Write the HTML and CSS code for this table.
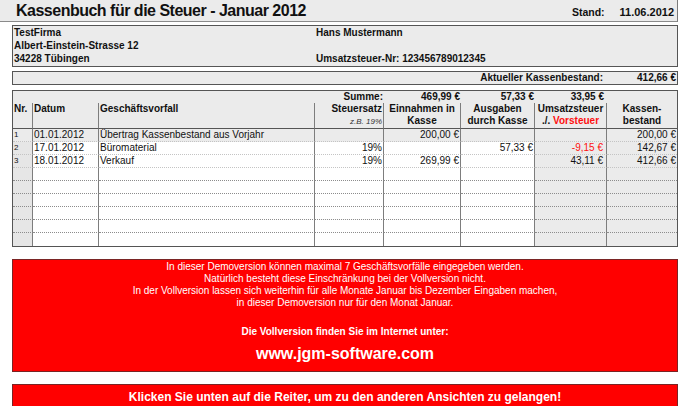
FILE: index.html
```html
<!DOCTYPE html>
<html lang="de">
<head>
<meta charset="utf-8">
<title>Kassenbuch</title>
<link rel="stylesheet" href="styles.css">
</head>
<body>
<div class="sheet">
  <header class="titlebar">
    <h1 class="title">Kassenbuch für die Steuer - Januar 2012</h1>
    <div class="stand"><span class="stand-label">Stand:</span><span class="stand-date">11.06.2012</span></div>
  </header>

  <section class="company">
    <div class="company-col">
      <div>TestFirma</div>
      <div>Albert-Einstein-Strasse 12</div>
      <div>34228 Tübingen</div>
    </div>
    <div class="company-col">
      <div>Hans Mustermann</div>
      <div>&nbsp;</div>
      <div>Umsatzsteuer-Nr: 123456789012345</div>
    </div>
  </section>

  <section class="balance">
    <span class="balance-label">Aktueller Kassenbestand:</span>
    <span class="balance-value">412,66 €</span>
  </section>

  <table class="book">
    <colgroup>
      <col class="c-nr"><col class="c-date"><col class="c-desc"><col class="c-tax">
      <col class="c-in"><col class="c-out"><col class="c-vat"><col class="c-bal">
    </colgroup>
    <tr class="sum-row">
      <td></td><td></td><td></td>
      <td class="r">Summe:</td>
      <td class="r">469,99 €</td>
      <td class="r">57,33 €</td>
      <td class="r vatpad">33,95 €</td>
      <td></td>
    </tr>
    <tr class="head-row">
      <th class="l">Nr.</th>
      <th class="l">Datum</th>
      <th class="l">Geschäftsvorfall</th>
      <th class="r">Steuersatz<br><span class="hint">z.B. 19%</span></th>
      <th>Einnahmen in<br>Kasse</th>
      <th>Ausgaben<br>durch Kasse</th>
      <th>Umsatzsteuer<br>./. <span class="red">Vorsteuer</span></th>
      <th>Kassen-<br>bestand</th>
    </tr>
    <tr class="row carry">
      <td class="nr">1</td><td>01.01.2012</td><td>Übertrag Kassenbestand aus Vorjahr</td>
      <td class="r"></td><td class="r">200,00 €</td><td class="r"></td><td class="r vat vatpad"></td><td class="r bal">200,00 €</td>
    </tr>
    <tr class="row">
      <td class="nr">2</td><td>17.01.2012</td><td>Büromaterial</td>
      <td class="r">19%</td><td class="r"></td><td class="r">57,33 €</td><td class="r vat vatpad red">-9,15 €</td><td class="r bal">142,67 €</td>
    </tr>
    <tr class="row">
      <td class="nr">3</td><td>18.01.2012</td><td>Verkauf</td>
      <td class="r">19%</td><td class="r">269,99 €</td><td class="r"></td><td class="r vat vatpad">43,11 €</td><td class="r bal">412,66 €</td>
    </tr>
    <tr class="row empty"><td class="nr"></td><td></td><td></td><td></td><td></td><td></td><td class="vat"></td><td class="bal"></td></tr>
    <tr class="row empty"><td class="nr"></td><td></td><td></td><td></td><td></td><td></td><td class="vat"></td><td class="bal"></td></tr>
    <tr class="row empty"><td class="nr"></td><td></td><td></td><td></td><td></td><td></td><td class="vat"></td><td class="bal"></td></tr>
    <tr class="row empty"><td class="nr"></td><td></td><td></td><td></td><td></td><td></td><td class="vat"></td><td class="bal"></td></tr>
    <tr class="row empty"><td class="nr"></td><td></td><td></td><td></td><td></td><td></td><td class="vat"></td><td class="bal"></td></tr>
    <tr class="row empty last"><td class="nr"></td><td></td><td></td><td></td><td></td><td></td><td class="vat"></td><td class="bal"></td></tr>
  </table>

  <section class="notice">
    <p class="notice-lines">In dieser Demoversion können maximal 7 Geschäftsvorfälle eingegeben werden.<br>
    Natürlich besteht diese Einschränkung bei der Vollversion nicht.<br>
    In der Vollversion lassen sich weiterhin für alle Monate Januar bis Dezember Eingaben machen,<br>
    in dieser Demoversion nur für den Monat Januar.</p>
    <p class="notice-bold">Die Vollversion finden Sie im Internet unter:</p>
    <p class="notice-url">www.jgm-software.com</p>
  </section>

  <section class="hintbox">
    <p>Klicken Sie unten auf die Reiter, um zu den anderen Ansichten zu gelangen!</p>
  </section>
</div>
</body>
</html>
```

FILE: styles.css
```css
* { box-sizing: border-box; }

html, body {
  margin: 0;
  padding: 0;
  background: #ffffff;
}

body {
  width: 680px;
  height: 406px;
  overflow: hidden;
  font-family: "Liberation Sans", Arial, sans-serif;
  font-size: 10px;
  color: #111111;
}

.sheet {
  display: flex;
  flex-direction: column;
  align-items: flex-start;
}

/* Title bar */
.titlebar {
  display: flex;
  align-items: baseline;
  justify-content: space-between;
  width: 678px;
  height: 22px;
  padding: 1px 3px 0 16px;
  background: #ebebeb;
  border-right: 1px solid #7a7a7a;
  border-bottom: 1px solid #8a8a8a;
}

.title {
  margin: 0;
  font-size: 16px;
  letter-spacing: -0.5px;
  line-height: 20px;
  font-weight: bold;
  color: #111;
}

.stand {
  display: flex;
  align-items: baseline;
  gap: 15px;
  font-weight: bold;
}

.stand-label { font-size: 10.5px; }
.stand-date { font-size: 11px; }

/* Company block */
.company {
  display: grid;
  grid-template-columns: 302px 1fr;
  margin: 3px 0 0 12px;
  width: 666px;
  height: 42px;
  padding: 0 0 0 1px;
  background: #ebebeb;
  border: 1px solid #555;
  font-weight: bold;
  line-height: 13px;
}

/* Current balance */
.balance {
  display: grid;
  grid-template-columns: 1fr 71px;
  margin: 4px 0 0 12px;
  width: 666px;
  height: 14px;
  background: #ebebeb;
  border: 1px solid #555;
  font-weight: bold;
  line-height: 12px;
}

.balance-label { text-align: right; padding-right: 3px; }
.balance-value { text-align: right; padding-right: 1px; }

/* Main table */
.book {
  margin: 5px 0 0 12px;
  width: 666px;
  table-layout: fixed;
  border-collapse: separate;
  border-spacing: 0;
  border: 1px solid #555;
}

.c-nr { width: 20px; }
.c-date { width: 66px; }
.c-desc { width: 216px; }
.c-tax { width: 69px; }
.c-in { width: 77px; }
.c-out { width: 74px; }
.c-vat { width: 72px; }
.c-bal { width: 70px; }

.book td, .book th {
  padding: 0 1px;
  font-size: 10px;
  line-height: 12px;
  white-space: nowrap;
  overflow: hidden;
  vertical-align: top;
}

.r { text-align: right; }
.l { text-align: left; }
.red { color: #ff1010; }

.sum-row td {
  height: 12px;
  background: #ebebeb;
  font-weight: bold;
}

.head-row th {
  height: 25px;
  background: #ebebeb;
  font-weight: bold;
  text-align: center;
  border-right: 1px solid #7d7d7d;
  border-bottom: 1px solid #555;
}
.head-row th.l { text-align: left; }
.head-row th.r { text-align: right; }
.head-row th:last-child { border-right: 0; }

.hint {
  font-weight: normal;
  font-style: italic;
  font-size: 8px;
  color: #333;
}

.row td {
  height: 13px;
  background: #ffffff;
  border-right: 1px solid #7d7d7d;
  border-bottom: 1px dotted #c4c4c4;
}
.row td:last-child { border-right: 0; }
.row.empty td { border-bottom: 1px dotted #8c8c8c; }
.row.last td { border-bottom: 0; }

.row td.nr {
  background: #e6e6e6;
  font-size: 8px;
  padding-left: 1px;
}
.row td.vat, .row td.bal { background: #ebebeb; }
.row.carry td { background: #ebebeb; }

.vatpad { padding-right: 3px !important; }

/* Notice boxes */
.notice {
  margin: 12px 0 0 12px;
  width: 666px;
  height: 113px;
  padding-top: 1px;
  background: #ff0000;
  border: 1px solid #7a2424;
  color: #ffffff;
  text-align: center;
}

.notice p { margin: 0; }

.notice-lines { line-height: 12px; }

.notice-bold {
  margin-top: 17px !important;
  font-weight: bold;
  line-height: 12px;
}

.notice-url {
  margin-top: 7px !important;
  font-size: 16px;
  font-weight: bold;
  line-height: 18px;
}

.hintbox {
  margin: 12px 0 0 12px;
  width: 666px;
  height: 30px;
  padding-top: 5px;
  background: #ff0000;
  border: 1px solid #7a2424;
  border-bottom: 0;
  color: #ffffff;
  text-align: center;
}

.hintbox p {
  margin: 0;
  font-size: 12px;
  font-weight: bold;
  line-height: 14px;
}
```
